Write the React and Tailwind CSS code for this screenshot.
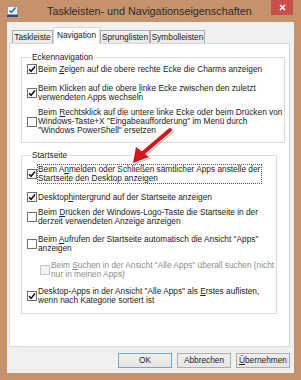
import React from 'react';

// small win8-style checkbox
const Check = ({ checked, disabled }) => (
  <span
    className={`w-[10px] h-[10px] shrink-0 border flex items-center justify-center ${
      disabled ? 'border-[#c6c6c6] bg-[#f2f2f2]' : 'border-[#707070] bg-white'
    }`}
  >
    {checked && (
      <svg width="8" height="8" viewBox="0 0 8 8">
        <path d="M1 4.2 L3.1 6.3 L7 1.6" fill="none" stroke="#111" strokeWidth="1.5" />
      </svg>
    )}
  </span>
);

const Item = ({ checked, disabled, focus, lines, className = '' }) => (
  <div className={`flex items-center min-h-[18px] ${className}`}>
    <Check checked={checked} disabled={disabled} />
    <div
      className={`leading-[9px] whitespace-nowrap pr-[1px] ${
        focus ? 'border border-dotted border-[#5a5a5a]' : 'border-x border-transparent'
      } ${disabled ? 'text-[#8d8d8d]' : 'text-[#222]'}`}
    >
      {lines.map((l, i) => (
        <div key={i}>{l}</div>
      ))}
    </div>
  </div>
);

const Tab = ({ label, active, width }) =>
  active ? (
    <div
      className={`${width} h-[17px] -mb-px relative z-10 bg-white border border-b-0 border-[#d9d9d9] flex items-start justify-center pt-[3px] leading-[9px]`}
    >
      {label}
    </div>
  ) : (
    <div
      className={`${width} h-[13px] bg-gradient-to-b from-[#f3f3f3] to-[#e7e7e7] border border-b-0 border-[#acacac] flex items-center justify-center leading-[9px]`}
    >
      {label}
    </div>
  );

const Btn = ({ children, primary }) => (
  <button
    className={`w-[54px] h-[15px] flex items-center justify-center leading-[9px] text-[#222] bg-gradient-to-b from-[#f0f0f0] to-[#e5e5e5] border ${
      primary ? 'border-[#6fa6de]' : 'border-[#acacac]'
    }`}
  >
    {children}
  </button>
);

export default function App() {
  return (
    <div
      className="relative w-[301px] h-[380px] bg-[#c6926c] flex flex-col text-[8.3px] text-[#222]"
      style={{ fontFamily: '"Liberation Sans", Arial, sans-serif' }}
    >
      {/* title bar */}
      <div className="h-[22px] flex items-start shrink-0">
        <div className="ml-[7px] mt-[6px] w-[11px] h-[11px]">
          <svg width="11" height="11" viewBox="0 0 11 11">
            <rect x="0.5" y="0.5" width="10" height="8" fill="#f4f7fb" stroke="#8aa0bd" />
            <path d="M2.5 4.5 L4.5 6.5 L8.5 1.5" fill="none" stroke="#2a63c5" strokeWidth="1.5" />
            <rect x="0" y="9" width="11" height="2" fill="#3b4a63" />
          </svg>
        </div>
        <div className="ml-[29px] mt-[5px] text-[10.8px] leading-[13px] text-[#2a2a2a] whitespace-nowrap">
          Taskleisten- und Navigationseigenschaften
        </div>
        <div className="ml-auto mr-[8px] w-[22px] h-[15px] bg-[#c7504c] flex items-center justify-center">
          <svg width="7" height="7" viewBox="0 0 7 7">
            <path d="M1 1 L6 6 M6 1 L1 6" stroke="#fff" strokeWidth="1.5" />
          </svg>
        </div>
      </div>

      {/* client area */}
      <div className="mx-[7px] mb-[7px] flex-1 bg-[#f0f0f0] flex flex-col">
        <div className="h-[21px] flex items-end pl-[5px]">
          <Tab label="Taskleiste" width="w-[41px]" />
          <Tab label="Navigation" width="w-[47px]" active />
          <Tab label="Sprunglisten" width="w-[50px]" />
          <Tab label="Symbolleisten" width="w-[55px]" />
        </div>

        <div className="ml-[2px] mr-[4px] h-[304px] bg-white border border-[#d9d9d9] pt-[8px] pl-[11px] pr-[13px]">
          <fieldset className="border border-[#dcdcdc] pl-[5px] pb-[7px]">
            <legend className="ml-[4px] px-[1px] leading-[10px]">Eckennavigation</legend>
            <Item
              checked
              className="-mt-[2px]"
              lines={[<>Beim <u>Z</u>eigen auf die obere rechte Ecke die Charms anzeigen</>]}
            />
            <Item
              checked
              className="mt-[6px]"
              lines={[
                <>Beim Klicken auf die obere <u>l</u>inke Ecke zwischen den zuletzt</>,
                'verwendeten Apps wechseln',
              ]}
            />
            <Item
              className="mt-[6px]"
              lines={[
                <>Beim <u>R</u>echtsklick auf die untere linke Ecke oder beim Drücken von</>,
                'Windows-Taste+X "Eingabeaufforderung" im Menü durch',
                '"Windows PowerShell" ersetzen',
              ]}
            />
          </fieldset>

          <fieldset className="mt-[7px] border border-[#dcdcdc] pl-[5px] pb-[8px]">
            <legend className="ml-[4px] px-[1px] leading-[10px]">Startseite</legend>
            <Item
              checked
              focus
              className="mt-[4px]"
              lines={[
                <>Beim A<u>n</u>melden oder Schließen sämtlicher Apps anstelle der</>,
                'Startseite den Desktop anzeigen',
              ]}
            />
            <Item
              checked
              className="mt-[4px]"
              lines={[<>Desktop<u>h</u>intergrund auf der Startseite anzeigen</>]}
            />
            <Item
              className="mt-[2px]"
              lines={[
                <>Beim <u>D</u>rücken der Windows-Logo-Taste die Startseite in der</>,
                'derzeit verwendeten Anzeige anzeigen',
              ]}
            />
            <Item
              className="mt-[9px]"
              lines={[
                <>Beim <u>A</u>ufrufen der Startseite automatisch die Ansicht "Apps"</>,
                'anzeigen',
              ]}
            />
            <Item
              disabled
              className="mt-[8px] ml-[13px]"
              lines={[
                <>Beim <u>S</u>uchen in der Ansicht "Alle Apps" überall suchen (nicht</>,
                'nur in meinen Apps)',
              ]}
            />
            <Item
              checked
              className="mt-[8px]"
              lines={[
                <>Desktop-Apps in der Ansicht "Alle Apps" als <u>E</u>rstes auflisten,</>,
                'wenn nach Kategorie sortiert ist',
              ]}
            />
          </fieldset>
        </div>

        <div className="mt-[6px] mr-[4px] flex justify-end gap-[5px]">
          <Btn primary>OK</Btn>
          <Btn>Abbrechen</Btn>
          <Btn>
            <u>Ü</u>bernehmen
          </Btn>
        </div>
      </div>

      {/* red annotation arrow */}
      <svg
        className="absolute left-[124px] top-[122px]"
        width="56"
        height="50"
        viewBox="0 0 56 50"
      >
        <g transform="translate(1.5,1.5)" opacity="0.35">
          <path d="M46 8 L19 31" stroke="#333" strokeWidth="4" strokeLinecap="round" />
          <path d="M9 41 L12 25 L25 35 Z" fill="#333" />
        </g>
        <path d="M46 8 L19 31" stroke="#fff" strokeWidth="6" strokeLinecap="round" />
        <path d="M9 41 L12 25 L25 35 Z" fill="#fff" stroke="#fff" strokeWidth="2" strokeLinejoin="round" />
        <path d="M46 8 L19 31" stroke="#d7141a" strokeWidth="4" strokeLinecap="round" />
        <path d="M9 41 L12 25 L25 35 Z" fill="#d7141a" />
      </svg>
    </div>
  );
}
